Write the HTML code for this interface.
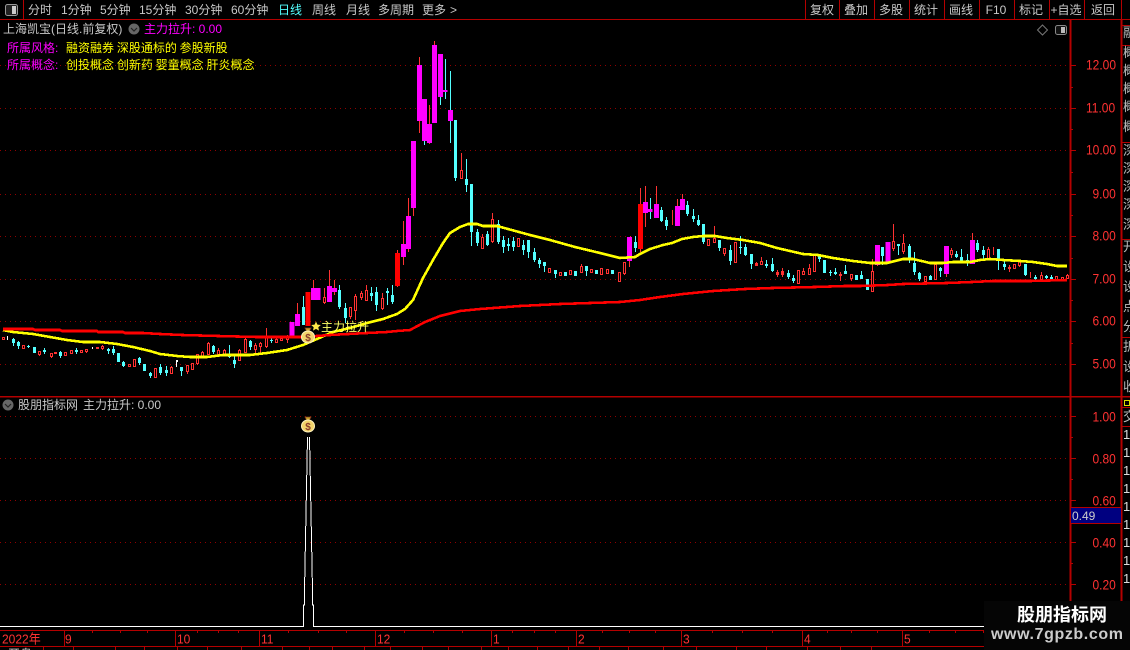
<!DOCTYPE html>
<html lang="zh"><head><meta charset="utf-8"><title>上海凯宝</title>
<style>
html,body{margin:0;padding:0;background:#000;width:1130px;height:650px;overflow:hidden}
#r{position:relative;width:1130px;height:650px;overflow:hidden;background:#000;font:12px/14px "Liberation Sans","WenQuanYi Zen Hei","Noto Sans CJK SC",sans-serif;color:#c8c8c8}
#r span{position:absolute;white-space:nowrap}
.m{color:#f0f}.y{color:#ff0;word-spacing:-.5px}
.a{color:#ff3232;font-size:12px;left:1086px;transform:scaleY(1.15)}
.a2{left:1092.500px}
.t{color:#ff3232;font-size:12px;top:632px;transform:scaleY(1.1)}
.b{top:3px;width:34px;text-align:center}
svg{position:absolute;left:0;top:0}
#s{position:absolute;left:1123px;top:0;width:7px;height:600px;overflow:hidden}
#s span{left:0;color:#bbb;font-size:13px}
</style></head><body><div id="r">
<svg width="1130" height="650" viewBox="0 0 1130 650">
<g fill="none" stroke="#900000" stroke-dasharray="1 4" shape-rendering="crispEdges">
<path d="M0 65.5H1070M0 108.5H1070M0 150.5H1070M0 194.5H1070M0 236.5H1070M0 279.5H1070M0 321.5H1070M0 364.5H1070M0 416.5H1070M0 458.5H1070M0 500.5H1070M0 542.5H1070M0 584.5H1070"/>
</g>
<g fill="none" stroke="#b40000" shape-rendering="crispEdges">
<path d="M0 19.5H1130M23.5 0V19M805.5 0V19M839.5 0V19M874.5 0V19M909.5 0V19M944.5 0V19M979.5 0V19M1014.5 0V19M1049.5 0V19M1084.5 0V19M1121.5 0V19"/>
<path d="M0 396.5H1130" stroke-width="1.5"/>
<path d="M1070.5 20V601" stroke-width="2"/>
<path d="M1121.5 20V601" stroke-width="2"/>
<path d="M1121 25.5H1130M1121 45.5H1130M1121 142.5H1130M1121 239.5H1130M1121 337.5H1130M1121 407.5H1130M1121 426.5H1130"/>
<path d="M1071 65.5h5M1071 108.5h5M1071 150.5h5M1071 194.5h5M1071 236.5h5M1071 279.5h5M1071 321.5h5M1071 364.5h5M1071 87.5h2M1071 129.5h2M1071 172.5h2M1071 215.5h2M1071 258.5h2M1071 300.5h2M1071 343.5h2M1071 416.5h5M1071 458.5h5M1071 500.5h5M1071 542.5h5M1071 584.5h5M1071 437.5h2M1071 479.5h2M1071 563.5h2"/>
<path d="M0 630.5H984M0 646.5H984M64.5 630V646M175.5 630V646M259.5 630V646M375.5 630V646M491.5 630V646M576.5 630V646M681.5 630V646M802.5 630V646M902.5 630V646"/>
<path d="M92.5 631v2M120.5 631v2M147.5 631v2M197.5 631v2M218.5 631v2M238.5 631v2M288.5 631v2M318.5 631v2M346.5 631v2M404.5 631v2M433.5 631v2M462.5 631v2M512.5 631v2M534.5 631v2M555.5 631v2M602.5 631v2M629.5 631v2M655.5 631v2M712.5 631v2M742.5 631v2M772.5 631v2M827.5 631v2M851.5 631v2M877.5 631v2M929.5 631v2M955.5 631v2M983.5 631v2"/>
<path d="M43.5 646v4M73.5 646v4M115.5 646v4M144.5 646v4M177.5 646v4M207.5 646v4M241.5 646v4M282.5 646v4M309.5 646v4M332.5 646v4M364.5 646v4M390.5 646v4M422.5 646v4M448.5 646v4M481.5 646v4M508.5 646v4M537.5 646v4M568.5 646v4M599.5 646v4M628.5 646v4M663.5 646v4M696.5 646v4M736.5 646v4M766.5 646v4M807.5 646v4M840.5 646v4M871.5 646v4"/>
</g>
<g fill="none" shape-rendering="crispEdges">
<path stroke="#ff3232" d="M39.5 354v2M51.5 356v2M86.5 351v2M102.5 345v1M102.5 348v2M171.5 366v1M187.5 371v3M197.5 363v2M202.5 351v1M208.5 342v1M218.5 348v2M218.5 354v3M224.5 349v1M239.5 349v1M245.5 338v1M255.5 343v2M255.5 349v4M260.5 342v1M260.5 346v7M266.5 328v9M266.5 346v2M276.5 337v2M287.5 335v2M287.5 339v4M324.5 288v9M324.5 302v2M350.5 316v3M355.5 294v2M355.5 310v10M361.5 291v2M361.5 297v3M366.5 285v5M382.5 293v5M382.5 308v2M461.5 153v17M482.5 234v3M492.5 213v6M492.5 241v2M581.5 264v2M624.5 273v2M714.5 226v12M724.5 253v3M756.5 262v4M761.5 257v4M777.5 270v7M782.5 268v9M803.5 268v3M809.5 264v4M840.5 272v9M851.5 278v3M872.5 259v12M893.5 224v17M893.5 248v3M903.5 234v9M903.5 251v3M951.5 248v2M951.5 254v4M988.5 247v2M1009.5 265v7M1019.5 265v2M1041.5 272v3M1067.5 274v1M672.5 210v15M993.5 247v8M1030.5 272v6"/>
<path stroke="#ff3232" d="M397.5 250v37M297.5 303v11M313.5 280v8M329.5 270v16M334.5 280v15M403.5 221v44M408.5 198v54M413.5 208v8M419.5 57v76M429.5 105v39M434.5 41v5M629.5 261v6M640.5 188v64M645.5 186v41M656.5 186v18M677.5 199v7M682.5 194v5M877.5 260v6M946.5 274v3M972.5 233v7M630.5 236v2"/>
<path stroke="#54ffff" d="M13.5 338v8M18.5 341v8M28.5 345v3M44.5 348v6M60.5 351v7M76.5 348v6M108.5 348v6M113.5 346v9M123.5 361v6M139.5 357v8M150.5 372v6M160.5 364v11M166.5 366v10M181.5 367v9M213.5 345v9M229.5 345v13M234.5 354v14M250.5 340v10M271.5 337v6M303.5 296v29M339.5 285v24M345.5 303v20M371.5 287v14M376.5 287v24M387.5 288v17M392.5 285v19M424.5 141v4M440.5 97v8M445.5 59v40M450.5 71v72M455.5 178v3M466.5 159v33M471.5 232v14M477.5 229v17M487.5 231v15M498.5 220v24M503.5 236v17M508.5 238v13M513.5 237v14M523.5 240v15M528.5 240v18M534.5 248v14M539.5 258v10M544.5 262v10M555.5 270v8M586.5 266v10M635.5 236v16M650.5 198v21M661.5 207v15M666.5 217v13M687.5 201v15M693.5 209v13M698.5 215v11M703.5 224v20M719.5 240v11M730.5 245v20M740.5 236v18M745.5 244v12M751.5 254v15M766.5 260v8M772.5 258v14M788.5 270v9M793.5 275v8M819.5 256v6M830.5 270v6M835.5 268v7M845.5 265v9M861.5 271v8M882.5 247v18M898.5 244v11M909.5 244v19M914.5 252v23M919.5 272v9M930.5 275v5M940.5 267v10M956.5 251v7M961.5 249v12M967.5 254v12M977.5 240v12M983.5 246v15M998.5 249v21M1004.5 261v9M1025.5 264v12M1035.5 275v5M1046.5 275v4M1051.5 275v4"/>
<path stroke="#54ffff" stroke-width="3" d="M13.5 339v4M18.5 342v4M28.5 346v1M34.5 347v6M44.5 350v2M60.5 352v4M76.5 350v2M108.5 349v2M113.5 349v4M118.5 353v9M123.5 362v4M139.5 358v5M144.5 364v7M150.5 373v3M160.5 367v6M166.5 370v3M181.5 367v4M213.5 346v6M229.5 355v2M234.5 360v4M250.5 341v6M271.5 340v1M303.5 307v18M339.5 290v17M345.5 308v10M371.5 293v3M376.5 292v13M387.5 291v2M392.5 295v7M455.5 120v58M466.5 179v6M471.5 184v48M477.5 232v11M487.5 234v11M498.5 224v18M503.5 240v7M508.5 244v2M513.5 241v6M523.5 245v5M528.5 240v12M534.5 252v8M539.5 260v4M544.5 262v4M555.5 270v4M565.5 272v4M575.5 271v5M586.5 266v5M596.5 270v4M612.5 270v4M635.5 242v6M661.5 210v11M666.5 220v6M687.5 205v9M693.5 216v3M698.5 220v5M703.5 224v18M719.5 240v8M730.5 250v11M740.5 247v1M745.5 247v8M751.5 254v10M766.5 264v2M772.5 264v7M788.5 273v4M793.5 278v3M819.5 256v3M824.5 260v13M830.5 272v1M835.5 272v2M845.5 271v3M856.5 275v5M861.5 275v4M867.5 279v11M882.5 247v9M898.5 244v2M909.5 246v13M914.5 263v9M919.5 273v6M930.5 276v4M940.5 268v3M956.5 254v3M961.5 257v4M967.5 260v1M977.5 243v7M983.5 250v5M998.5 249v11M1004.5 264v3M1025.5 264v11M1035.5 277v2M1046.5 276v2M1051.5 277v2"/>
<path stroke="#ffffff" d="M7.5 336v4M92.5 347v2M176.5 360v7M177.5 360v2"/>
<path stroke="#ff3232" d="M2.5 337.5h2v2h-2zM22.5 345.5h2v3h-2zM38.5 351.5h2v3h-2zM50.5 353.5h2v3h-2zM54.5 352.5h2v1h-2zM64.5 352.5h2v3h-2zM70.5 350.5h2v3h-2zM80.5 350.5h2v2h-2zM85.5 349.5h2v2h-2zM96.5 347.5h2v1h-2zM101.5 346.5h2v2h-2zM128.5 364.5h2v2h-2zM133.5 359.5h2v7h-2zM154.5 368.5h2v9h-2zM170.5 367.5h2v6h-2zM186.5 365.5h2v6h-2zM191.5 363.5h2v6h-2zM196.5 354.5h2v9h-2zM201.5 352.5h2v4h-2zM207.5 343.5h2v11h-2zM217.5 350.5h2v4h-2zM223.5 350.5h2v4h-2zM238.5 350.5h2v10h-2zM244.5 339.5h2v13h-2zM254.5 345.5h2v4h-2zM259.5 343.5h2v3h-2zM265.5 337.5h2v9h-2zM275.5 339.5h2v3h-2zM280.5 338.5h2v2h-2zM286.5 337.5h2v2h-2zM323.5 297.5h2v5h-2zM349.5 307.5h2v9h-2zM354.5 296.5h2v14h-2zM360.5 293.5h2v4h-2zM365.5 290.5h2v10h-2zM381.5 298.5h2v10h-2zM460.5 170.5h2v8h-2zM481.5 237.5h2v11h-2zM491.5 219.5h2v22h-2zM517.5 238.5h2v8h-2zM548.5 268.5h2v4h-2zM559.5 272.5h2v3h-2zM569.5 270.5h2v4h-2zM580.5 266.5h2v6h-2zM590.5 269.5h2v3h-2zM600.5 268.5h2v6h-2zM606.5 269.5h2v4h-2zM618.5 272.5h2v9h-2zM623.5 262.5h2v11h-2zM707.5 239.5h2v6h-2zM713.5 238.5h2v4h-2zM723.5 248.5h2v5h-2zM734.5 242.5h2v20h-2zM755.5 263.5h2v2h-2zM760.5 261.5h2v3h-2zM776.5 272.5h2v2h-2zM781.5 271.5h2v3h-2zM797.5 270.5h2v13h-2zM802.5 271.5h2v3h-2zM808.5 268.5h2v6h-2zM813.5 254.5h2v17h-2zM839.5 274.5h2v1h-2zM850.5 274.5h2v4h-2zM871.5 271.5h2v20h-2zM892.5 241.5h2v7h-2zM902.5 243.5h2v8h-2zM924.5 276.5h2v5h-2zM934.5 264.5h2v15h-2zM950.5 250.5h2v4h-2zM987.5 249.5h2v9h-2zM1008.5 267.5h2v1h-2zM1013.5 264.5h2v4h-2zM1018.5 261.5h2v4h-2zM1040.5 275.5h2v4h-2zM1055.5 276.5h2v3h-2zM1061.5 277.5h2v2h-2zM1066.5 275.5h2v3h-2z"/>
<path stroke="#ff0000" stroke-width="5" d="M308 292v34M397.5 253v33M640.5 204v45"/>
<path stroke="#ff00ff" stroke-width="5" d="M292 322v14M297.5 314v12M313.5 288v12M318 288v12M329.5 286v16M334.5 288v4M403.5 244v13M408.5 216v33M413.5 141v67M419.5 65v56M424.5 99v42M429.5 124v19M434.5 45v78M440.5 54v43M445 90v2M450.5 110v11M629.5 237v24M645.5 202v11M650 209v3M656.5 204v14M677.5 206v20M682.5 199v11M877.5 245v20M888 242v20M946.5 246v28M972.5 240v24"/>
<path stroke="#ffff00" stroke-width="2.6" d="M3 330L13 332 33 334 50 337 67 340 83 342 100 342 117 344 133 347 150 351 160 354 177 356 190 357 207 357 223 355 250 355 267 353 287 350 303 345 317 339 333 332 350 328 367 323 383 319 397 314 405 309 413 300 423 278 433 260 443 243 450 233 460 227 468 224 477 224 483 226 497 226 508 229 530 235 550 240 575 247 600 253 620 258 635 257 640 254 650 249 663 245 672 243 682 239 693 237 703 236 715 236 727 238 743 240 760 243 777 248 790 251 803 254 818 255 833 258 853 261 870 263 887 263 903 259 913 259 930 263 943 263 953 262 970 262 980 260 990 259 1003 260 1020 261 1033 262 1047 264 1057 266 1067 266"/>
<path stroke="#ff0000" stroke-width="2.6" d="M3 329H33L35 330H60L62 331H97L98 332H123L125 333H143L160 334 182 335 218 336 257 337H300L317 336 330 335 367 333 387 332 397 331 410 330 425 322 440 316 460 311 480 309 520 306 560 304 620 302 640 300 660 297 683 294 713 291 745 289 772 288 815 287 845 286 860 286 888 285 903 284 947 283 972 282 993 281 1030 281 1067 280"/>
<path stroke="#fff" d="M0 626.5H303.5V605H304.5V590L307.5 437M309.5 437L312.5 590V605H313.5V626.5H984"/>
</g>
<g transform="translate(308 336)">
<path d="M-3-8h6l-1.500 3h-3z" fill="#c9a227" stroke="#7a3b1c" stroke-width=".8"/>
<ellipse cx="0" cy="1" rx="6.500" ry="6" fill="#f2d36a" stroke="#fff3c0"/>
<text x="0" y="5" text-anchor="middle" font-size="10" font-weight="bold" fill="#8a3a2a" font-family="Liberation Sans">$</text>
</g>
<g transform="translate(308 425)">
<path d="M-3-8h6l-1.500 3h-3z" fill="#c9a227" stroke="#7a3b1c" stroke-width=".8"/>
<ellipse cx="0" cy="1" rx="6.500" ry="6" fill="#f2d36a" stroke="#fff3c0"/>
<text x="0" y="5" text-anchor="middle" font-size="10" font-weight="bold" fill="#8a3a2a" font-family="Liberation Sans">$</text>
</g>
<path d="M316 321.500l1.400 3.100 3.400.4-2.500 2.300.7 3.300-3-1.700-3 1.700.7-3.300-2.500-2.300 3.400-.4z" fill="#ffe84a"/>
<g>
<rect x="5.500" y="4.500" width="12" height="11" rx="2" fill="#222" stroke="#999"/><rect x="12" y="6" width="4" height="8" fill="#ccc"/>
<circle cx="134" cy="29" r="5.500" fill="#666"/><path d="M131 28l3 3 3-3" fill="none" stroke="#222" stroke-width="1.200"/>
<circle cx="8" cy="405" r="5.500" fill="#666"/><path d="M5 404l3 3 3-3" fill="none" stroke="#222" stroke-width="1.200"/>
<path d="M1042.500 25l5 5-5 5-5-5z" fill="none" stroke="#777"/>
<rect x="1055.500" y="25.500" width="11" height="9" rx="2" fill="#111" stroke="#888"/><rect x="1061" y="27" width="4" height="6" fill="#bbb"/>
</g>
<rect x="1071" y="507" width="50" height="17" fill="#000080"/>
<path d="M1071 507.500H1121M1071 523.500H1121" stroke="#b40000"/>
<rect x="1124.500" y="400.500" width="5" height="5" fill="none" stroke="#dd0"/>
<rect x="984" y="601" width="146" height="49" fill="#050505"/>
</svg>
<span style="left:28px;top:3px">分时</span><span style="left:61px;top:3px">1分钟</span><span style="left:100px;top:3px">5分钟</span><span style="left:139px;top:3px">15分钟</span><span style="left:185px;top:3px">30分钟</span><span style="left:231px;top:3px">60分钟</span><span style="left:278px;top:3px;color:#54ffff">日线</span><span style="left:312px;top:3px">周线</span><span style="left:346px;top:3px">月线</span><span style="left:378px;top:3px">多周期</span><span style="left:422px;top:3px">更多</span><span style="left:450px;top:3px">&gt;</span>
<span class="b" style="left:805px">复权</span><span class="b" style="left:839px">叠加</span><span class="b" style="left:874px">多股</span><span class="b" style="left:909px">统计</span><span class="b" style="left:944px">画线</span><span class="b" style="left:979px">F10</span><span class="b" style="left:1014px">标记</span><span class="b" style="left:1049px">+自选</span><span class="b" style="left:1086px">返回</span>
<span style="left:3px;top:22px">上海凯宝(日线.前复权)</span><span class="m" style="left:144px;top:22px">主力拉升: 0.00</span>
<span class="m" style="left:7px;top:41px">所属风格:</span><span class="y" style="left:66px;top:41px">融资融券 深股通标的 参股新股</span>
<span class="m" style="left:7px;top:58px">所属概念:</span><span class="y" style="left:66px;top:58px">创投概念 创新药 婴童概念 肝炎概念</span>
<span style="left:321px;top:320px;color:#ffff66">主力拉升</span>
<span style="left:18px;top:398px">股朋指标网</span><span style="left:83px;top:398px">主力拉升: 0.00</span>
<span class="a" style="top:58px">12.00</span><span class="a" style="top:101px">11.00</span><span class="a" style="top:143px">10.00</span><span class="a a2" style="top:187px">9.00</span><span class="a a2" style="top:229px">8.00</span><span class="a a2" style="top:272px">7.00</span><span class="a a2" style="top:314px">6.00</span><span class="a a2" style="top:357px">5.00</span>
<span class="a a2" style="top:410px">1.00</span><span class="a a2" style="top:452px">0.80</span><span class="a a2" style="top:494px">0.60</span><span class="a a2" style="top:536px">0.40</span><span class="a a2" style="top:578px">0.20</span>
<span style="left:1072px;top:509px;color:#ccc">0.49</span>
<span class="t" style="left:2px">2022年</span><span class="t" style="left:65px">9</span><span class="t" style="left:177px">10</span><span class="t" style="left:261px">11</span><span class="t" style="left:377px">12</span><span class="t" style="left:493px">1</span><span class="t" style="left:578px">2</span><span class="t" style="left:683px">3</span><span class="t" style="left:804px">4</span><span class="t" style="left:904px">5</span>
<span style="left:8px;top:647px">开盘</span><span style="left:50px;top:647px;color:#aaa">-</span>
<div id="s"><span style="top:26px">融</span><span style="top:46px">概</span><span style="top:64px">概</span><span style="top:82px">概</span><span style="top:100px">概</span><span style="top:120px">概</span><span style="top:144px">深</span><span style="top:162px">深</span><span style="top:180px">深</span><span style="top:198px">深</span><span style="top:218px">深</span><span style="top:240px">开</span><span style="top:260px">设</span><span style="top:280px">设</span><span style="top:300px">点</span><span style="top:320px">分</span><span style="top:340px">折</span><span style="top:360px">设</span><span style="top:380px">收</span><span style="top:410px">交</span>
<span style="top:428px;color:#ddd">1</span><span style="top:446px;color:#ddd">1</span><span style="top:464px;color:#ddd">1</span><span style="top:482px;color:#ddd">1</span><span style="top:500px;color:#ddd">1</span><span style="top:518px;color:#ddd">1</span><span style="top:536px;color:#ddd">1</span><span style="top:554px;color:#ddd">1</span><span style="top:572px;color:#ddd">1</span></div>
<span style="left:1017px;top:604px;color:#fff;font-size:18px;line-height:22px;font-weight:bold">股朋指标网</span>
<span style="left:991px;top:626px;color:#ccc;font-size:16px;line-height:18px;font-weight:bold;letter-spacing:.6px">www.7gpzb.com</span>
</div></body></html>
